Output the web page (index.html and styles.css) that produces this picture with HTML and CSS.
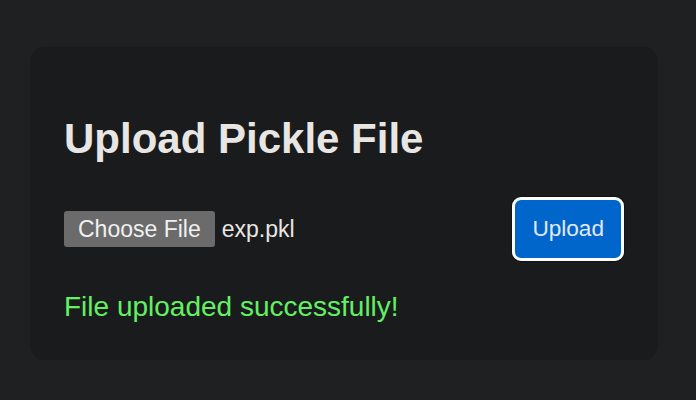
FILE: index.html
```html
<!DOCTYPE html>
<html lang="en">
<head>
<meta charset="utf-8">
<title>Upload Pickle File</title>
<link rel="stylesheet" href="styles.css">
</head>
<body>
<main class="page">
  <section class="card">
    <h1 class="title">Upload Pickle File</h1>
    <form class="upload-row">
      <div class="file-field">
        <span class="file-btn">Choose File</span>
        <span class="file-name">exp.pkl</span>
      </div>
      <button type="button" class="upload-btn">Upload</button>
    </form>
    <p class="status">File uploaded successfully!</p>
  </section>
</main>
</body>
</html>
```
FILE: styles.css
```css
html, body {
  margin: 0;
  padding: 0;
  background: #1e2021;
  font-family: "Liberation Sans", Arial, sans-serif;
}
.page {
  padding: 47px 38px 0 30px;
}
.card {
  background: #1a1b1d;
  border-radius: 15px;
  padding: 35px 34px 37px 34px;
}
.title {
  margin: 33px 0 34px;
  font-size: 42px;
  font-weight: bold;
  color: #e8e6e3;
  line-height: normal;
}
.upload-row {
  display: flex;
  align-items: center;
  justify-content: space-between;
  margin: 0 0 30px;
}
.file-field {
  display: flex;
  align-items: center;
  gap: 7px;
}
.file-btn {
  background: #6b6b6b;
  color: #f0f0f0;
  font-size: 23px;
  line-height: 26px;
  padding: 5px 14px;
  border-radius: 3px;
}
.file-name {
  color: #e8e6e3;
  font-size: 23px;
}
.upload-btn {
  font-family: inherit;
  background: #0066cc;
  color: #e3e8ef;
  font-size: 22.6px;
  line-height: 26px;
  padding: 16px 17px;
  border: 3px solid #ffffff;
  border-radius: 9px;
  box-shadow: 0 0 0 1px #111;
}
.status {
  margin: 0;
  font-size: 28px;
  color: #63f063;
  line-height: normal;
}
```
